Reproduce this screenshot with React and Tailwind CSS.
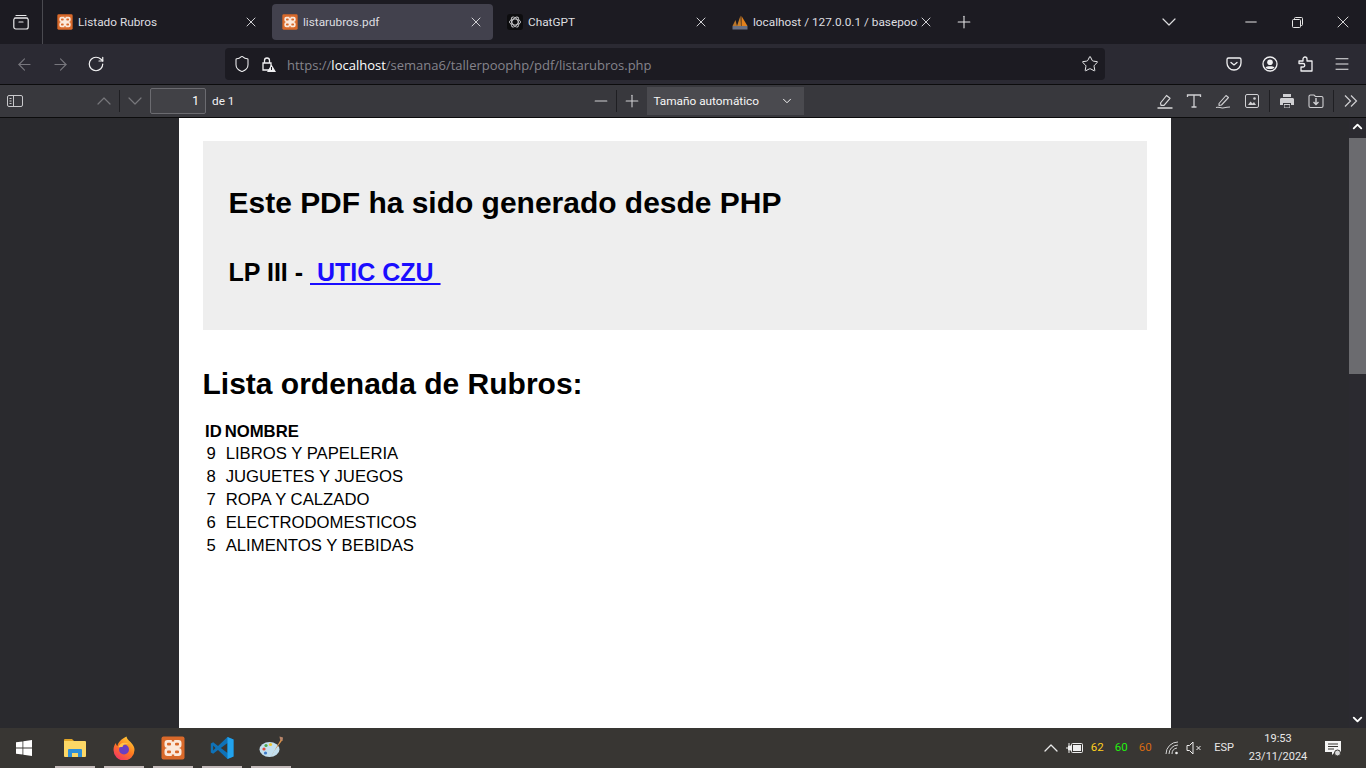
import React from "react";
import { ChevronDown, ChevronUp, Minus, Plus, X, RotateCw, ArrowLeft, ArrowRight, Star, Menu, Shield } from "lucide-react";

const XamppIcon = ({ size = 16 }) => (
  <svg width={size} height={size} viewBox="0 0 24 24" className="shrink-0">
    <rect x="0.5" y="0.5" width="23" height="23" rx="2" fill="#d9692a" />
    <path
      d="M6.500 4h11a3 3 0 0 1 3 3v2a3 3 0 0 1-3 3 3 3 0 0 1 3 3v2a3 3 0 0 1-3 3h-11a3 3 0 0 1-3-3v-2a3 3 0 0 1 3-3 3 3 0 0 1-3-3V7a3 3 0 0 1 3-3z"
      fill="#fbe9dc"
    />
    <g fill="#d9692a">
      <rect x="6" y="6.800" width="4" height="2.800" rx="1" />
      <rect x="14" y="6.800" width="4" height="2.800" rx="1" />
      <rect x="6" y="14.400" width="4" height="2.800" rx="1" />
      <rect x="14" y="14.400" width="4" height="2.800" rx="1" />
      <rect x="10.800" y="3.500" width="2.400" height="2" />
      <rect x="10.800" y="18.500" width="2.400" height="2" />
    </g>
  </svg>
);

const GptIcon = () => (
  <svg width="16" height="16" viewBox="0 0 16 16" className="shrink-0">
    <rect width="16" height="16" rx="3" fill="#0d0d0f" />
    <g fill="none" stroke="#c9c9cc" strokeWidth="0.9">
      <ellipse cx="8" cy="8" rx="5.500" ry="3" />
      <ellipse cx="8" cy="8" rx="5.500" ry="3" transform="rotate(60 8 8)" />
      <ellipse cx="8" cy="8" rx="5.500" ry="3" transform="rotate(120 8 8)" />
    </g>
  </svg>
);

const PmaIcon = () => (
  <svg width="16" height="16" viewBox="0 0 16 16" className="shrink-0">
    <path d="M0.500 12 3.500 6l1.500 6z" fill="#b9762c" />
    <path d="M5 12 8.500 1.500 9 12z" fill="#c9802a" />
    <path d="M9.500 12V2l6 10z" fill="#e2811c" />
    <rect x="0.500" y="12" width="15" height="3.500" fill="#6a7184" />
  </svg>
);

const Tab = ({ icon, title, active }) => (
  <div className={`flex items-center w-[221px] h-9 rounded pl-[10px] pr-[9px] shrink-0 ${active ? "bg-[#42414d]" : ""}`}>
    {icon}
    <span className="ml-[5px] pt-[3px] flex-1 text-[11.8px] text-[#dedee0] whitespace-nowrap overflow-hidden">{title}</span>
    <X size={16} strokeWidth={1.500} className="text-[#d0d0d4] shrink-0" />
  </div>
);

const Sep = ({ className = "" }) => <div className={`w-px h-[22px] bg-[#1f1f23] ${className}`} />;

const TabBar = () => (
  <div className="flex items-center h-11 bg-[#1c1b22] shrink-0 font-['Roboto',sans-serif]">
    <div className="flex items-center justify-center w-[43px] h-11 border-r border-[#4a4a50]">
      <svg width="16" height="16" viewBox="0 0 16 16" fill="none" stroke="#e8e8ea" strokeWidth="1.200">
        <path d="M3 1.500h10M1.500 4h13" strokeLinecap="round" />
        <rect x="0.800" y="4" width="14.400" height="11" rx="2" />
        <path d="M6 8h4" strokeLinecap="round" />
      </svg>
    </div>
    <div className="flex items-center ml-[4px] h-9 gap-[4px] mt-[-0.5px]">
      <Tab icon={<XamppIcon />} title="Listado Rubros" />
      <Tab icon={<XamppIcon />} title="listarubros.pdf" active />
      <Tab icon={<GptIcon />} title="ChatGPT" />
      <Tab icon={<PmaIcon />} title="localhost / 127.0.0.1 / basepoo2" />
    </div>
    <Plus size={20} strokeWidth={1.300} className="ml-[11px] text-[#e4e4e6]" />
    <div className="flex-1" />
    <ChevronDown size={24} strokeWidth={1.200} className="mr-[61px] text-[#dcdcde]" />
    <Minus size={18} strokeWidth={1.200} className="mr-[32px] text-white" />
    <svg width="11" height="11" viewBox="0 0 11 11" fill="none" stroke="#e6e6e6" className="mr-[30px]">
      <rect x="0.500" y="2.500" width="8" height="8" rx="1" />
      <path d="M2.500 2.500V1.500a1 1 0 0 1 1-1h6a1 1 0 0 1 1 1v6a1 1 0 0 1-1 1H8.500" />
    </svg>
    <X size={20} strokeWidth={1.100} className="mr-[13px] text-[#e6e6e6]" />
  </div>
);

const NavBar = () => (
  <div className="flex items-center h-[41px] bg-[#2b2a33] shrink-0 border-b border-[#0c0c0d]">
    <ArrowLeft size={19} strokeWidth={1.400} className="ml-[15px] text-[#77767d]" />
    <ArrowRight size={19} strokeWidth={1.400} className="ml-[17px] text-[#77767d]" />
    <RotateCw size={18} strokeWidth={1.600} className="ml-[17px] text-[#f2f2f3]" />
    <div className="flex items-center ml-[120px] w-[880px] h-8 bg-[#1c1b22] rounded pl-[8px] pr-[6px]">
      <Shield size={18} strokeWidth={1.400} className="text-[#f0f0f2]" />
      <svg width="16" height="16" viewBox="0 0 16 16" className="ml-[9px]">
        <path d="M3 7h8v7H3z" fill="none" stroke="#f0f0f2" strokeWidth="1.300" />
        <path d="M4.500 7V4.500a2.500 2.500 0 0 1 5 0V7" fill="none" stroke="#f0f0f2" strokeWidth="1.300" />
        <path d="M11.500 8.500 16 16H7z" fill="#f0f0f2" />
        <rect x="11" y="11" width="1" height="3" fill="#1c1b22" />
      </svg>
      <span className="ml-[11px] pt-[3px] text-[13px] text-[#85848c] whitespace-nowrap font-['Open_Sans',sans-serif]">
        https://<span className="text-white">localhost</span>/semana6/tallerpoophp/pdf/listarubros.php
      </span>
      <div className="flex-1" />
      <Star size={18} strokeWidth={1.300} className="text-[#f0f0f2]" />
    </div>
    <div className="flex-1" />
    <svg width="16" height="16" viewBox="0 0 16 16" fill="none" stroke="#f0f0f2" strokeWidth="1.300" className="mr-[20px]">
      <path d="M2.500 2h11A1.500 1.500 0 0 1 15 3.500V7a7 7 0 0 1-14 0V3.500A1.500 1.500 0 0 1 2.500 2z" />
      <path d="M5 6.500 8 9l3-2.500" strokeLinecap="round" />
    </svg>
    <svg width="16" height="16" viewBox="0 0 16 16" className="mr-[20px]">
      <circle cx="8" cy="8" r="7" fill="none" stroke="#f0f0f2" strokeWidth="1.300" />
      <circle cx="8" cy="6.200" r="2.800" fill="#f0f0f2" />
      <path d="M3.500 11.500c1-1.600 8-1.600 9 0C11 13.500 5 13.500 3.500 11.500z" fill="#f0f0f2" />
    </svg>
    <svg width="16" height="16" viewBox="0 0 16 16" fill="none" stroke="#f0f0f2" strokeWidth="1.300" className="mr-[19px]">
      <path d="M1 5h4V3a2 2 0 0 1 4 0l0 2h5v10H3v-4h2a1.500 1.500 0 0 0 0-3.500H1z" strokeLinejoin="round" />
    </svg>
    <Menu size={18} strokeWidth={1.300} className="mr-[15px] text-[#f0f0f2]" />
  </div>
);

const PdfBar = () => (
  <div className="flex items-center h-[33px] bg-[#38383d] shrink-0 border-b border-[#0c0c0d] font-['Roboto',sans-serif]">
    <svg width="16" height="14" viewBox="0 0 16 14" fill="none" stroke="#c8c8cb" className="ml-[7px]">
      <rect x="0.500" y="1.500" width="15" height="11" rx="1.500" />
      <path d="M6.500 1.500v11M2.500 4.500h2M2.500 7h2M2.500 9.500h2" />
    </svg>
    <ChevronUp size={24} strokeWidth={1.200} className="ml-[69px] text-[#77777b]" />
    <Sep className="ml-[3px]" />
    <ChevronDown size={24} strokeWidth={1.200} className="ml-[3px] text-[#77777b]" />
    <div className="flex items-center justify-end ml-[3px] w-[56px] h-[26px] bg-[#414146] border border-[#6b6b70] rounded-[2px] pr-[6px] text-[12px] text-white">
      1
    </div>
    <span className="ml-[6px] pt-[1px] text-[11.8px] text-[#f0f0f2]">de 1</span>
    <Minus size={20} strokeWidth={1.300} className="ml-[357px] text-[#d0d0d3]" />
    <Sep className="ml-[5px]" />
    <Plus size={20} strokeWidth={1.300} className="ml-[5px] text-[#d0d0d3]" />
    <div className="flex items-center justify-between ml-[5px] w-[157px] h-7 bg-[#4a4a4f] pl-[6px] pr-[10px] text-[11.8px] text-[#f6f6f6]">
      <span className="pt-[1px]">Tamaño automático</span>
      <ChevronDown size={14} strokeWidth={1.700} />
    </div>
    <div className="flex-1" />
    <svg width="16" height="16" viewBox="0 0 16 16" fill="none" stroke="#d8d8da" strokeWidth="1.200" className="mr-[13px]">
      <path d="M3.500 10 9.500 2.500l3.500 2.800-6 7H4z" strokeLinejoin="round" />
      <path d="M0.500 15h15" strokeWidth="1.500" />
    </svg>
    <svg width="16" height="16" viewBox="0 0 16 16" fill="none" stroke="#d0d0d3" strokeWidth="1.300" className="mr-[13px]">
      <path d="M1.500 4V2h13v2M8 2v12M5.500 14h5" />
    </svg>
    <svg width="16" height="16" viewBox="0 0 16 16" fill="none" stroke="#d0d0d3" strokeWidth="1.100" className="mr-[14px]">
      <path d="M4 10.500 11 2.500l2.500 2-7 7.500-2.500.5z" strokeLinejoin="round" />
      <path d="M1 14.500c3-1 4 .5 6 .5s3-1 8-1" />
    </svg>
    <svg width="14" height="14" viewBox="0 0 14 14" className="mr-[10px]">
      <rect x="0.500" y="0.500" width="13" height="13" rx="1.500" fill="none" stroke="#d0d0d3" />
      <path d="M3 11l2.500-3.500 2 2 1.500-1.500L11 11z" fill="#d0d0d3" />
      <circle cx="9.500" cy="4.500" r="1.300" fill="#d0d0d3" />
    </svg>
    <Sep className="mr-[9px]" />
    <svg width="16" height="16" viewBox="0 0 16 16" className="mr-[13px]">
      <path d="M4 1h8v3H4z" fill="#d0d0d3" />
      <path d="M2 5h12a2 2 0 0 1 1 1v6h-3v-2H4v2H1V6a2 2 0 0 1 1-1z" fill="#d0d0d3" />
      <path d="M5 11h6v4H5z" fill="#d0d0d3" />
      <path d="M5.500 12h5v2.500h-5z" fill="#38383d" />
    </svg>
    <svg width="16" height="15" viewBox="0 0 16 15" fill="none" stroke="#d0d0d3" strokeWidth="1.100" className="mr-[9px]">
      <path d="M1 2.500a1.500 1.500 0 0 1 1.500-1.500H6l1.500 1.500h6A1.500 1.500 0 0 1 15 4v8a1.500 1.500 0 0 1-1.500 1.500h-11A1.500 1.500 0 0 1 1 12z" />
      <path d="M8 4v6M5.500 8 8 10.500 10.500 8" strokeWidth="1.400" />
    </svg>
    <Sep className="mr-[10px]" />
    <svg width="14" height="14" viewBox="0 0 14 14" fill="none" stroke="#d0d0d3" strokeWidth="1.200" className="mr-[8px]">
      <path d="M1 1.500 6.500 7 1 12.500M7 1.500 12.500 7 7 12.500" />
    </svg>
  </div>
);

const rubros = [
  [9, "LIBROS Y PAPELERIA"],
  [8, "JUGUETES Y JUEGOS"],
  [7, "ROPA Y CALZADO"],
  [6, "ELECTRODOMESTICOS"],
  [5, "ALIMENTOS Y BEBIDAS"],
];

const PdfPage = () => (
  <div className="w-[992px] bg-white pt-[23px] px-6 text-black font-['Liberation_Sans',Arial,sans-serif]">
    <div className="bg-[#eeeeee] h-[189px] pl-[26px] pt-[44px]">
      <h1 className="text-[29.98px] leading-[36px] font-bold">Este PDF ha sido generado desde PHP</h1>
      <h2 className="mt-[37px] text-[25px] leading-[28px] font-bold">
        LP III - <a className="text-[#1a0dff] underline whitespace-pre"> UTIC CZU </a>
      </h2>
    </div>
    <h2 className="mt-[36px] text-[30px] leading-[36px] font-bold">Lista ordenada de Rubros:</h2>
    <table className="mt-[19px] ml-[1.5px] text-[16.7px] border-separate border-spacing-0">
      <thead>
        <tr className="h-[21px] leading-[21px]">
          <th className="px-[1px] font-bold">ID</th>
          <th className="pl-[2px] font-bold text-left">NOMBRE</th>
        </tr>
      </thead>
      <tbody>
        {rubros.map(([id, name]) => (
          <tr key={id} className="h-[23px] leading-[23px]">
            <td className="text-left pl-[2.500px]">{id}</td>
            <td className="pl-[3px]">{name}</td>
          </tr>
        ))}
      </tbody>
    </table>
  </div>
);

const Scrollbar = () => (
  <div className="flex flex-col items-center w-[17px] bg-[#2b2a30]">
    <ChevronUp size={15} strokeWidth={3} className="mt-[1px] text-white" />
    <div className="mt-[4px] w-full h-[236px] bg-[#6b6b6f]" />
    <div className="flex-1" />
    <ChevronDown size={15} strokeWidth={3} className="mb-[1px] text-white" />
  </div>
);

const TaskItem = ({ children }) => (
  <div className="relative flex items-center justify-center w-[40px] h-10 mr-[9px]">
    {children}
    <div className="absolute bottom-0 inset-x-0 h-[2px] bg-[#c2b9b9]" />
  </div>
);

const Taskbar = () => (
  <div className="flex items-center h-10 bg-[#383633] shrink-0 text-[#e8e8e8] font-['Roboto',sans-serif]">
    <svg width="16" height="16" viewBox="0 0 16 16" className="ml-[16px] mr-[23px]" fill="#fff">
      <path d="M0 2.300 6.500 1.400V7.600H0zM7.300 1.300 16 0V7.600H7.300zM0 8.400H6.500V14.600L0 13.700zM7.300 8.400H16V16L7.300 14.700z" />
    </svg>
    <TaskItem>
      <svg width="22" height="20" viewBox="0 0 22 20">
        <path d="M0 2a1 1 0 0 1 1-1h7l2 2h-10z" fill="#e0a526" />
        <path d="M0 3h21a1 1 0 0 1 1 1v14a1 1 0 0 1-1 1H1a1 1 0 0 1-1-1z" fill="#fbd766" />
        <path d="M4 19v-7a1 1 0 0 1 1-1h12a1 1 0 0 1 1 1v7h-4v-4H8v4z" fill="#2e8fd8" />
      </svg>
    </TaskItem>
    <TaskItem>
      <svg width="24" height="24" viewBox="0 0 24 24">
        <defs>
          <linearGradient id="foxFlame" x1="0.800" y1="0" x2="0.200" y2="1">
            <stop offset="0" stopColor="#ffd43a" />
            <stop offset="0.500" stopColor="#ff7a1e" />
            <stop offset="1" stopColor="#f0306a" />
          </linearGradient>
        </defs>
        <path d="M14.500 0.500c.5 2.500 2 3.500 4 5.500 3 3 4 5.500 4 8a10.500 10.500 0 0 1-21 0c0-3 1-5.500 2.500-7 0 1.500.5 2.500 1.500 3 .5-4 4-7 9-9.500z" fill="url(#foxFlame)" />
        <circle cx="12" cy="13.500" r="5" fill="#6a3fc2" />
        <path d="M6.500 11c1.500-4 6-5.500 10-3-3.500-.5-5.500.5-6 3-1.500 0-3 .5-4 0z" fill="#ffc24a" />
      </svg>
    </TaskItem>
    <TaskItem>
      <XamppIcon size={24} />
    </TaskItem>
    <TaskItem>
      <svg width="24" height="24" viewBox="0 0 24 24">
        <path
          fillRule="evenodd"
          d="M17.500 1 8 10 3.200 6.300 0.800 7.600V16.400L3.200 17.700 8 14 17.500 23 23.500 20.500V3.500zM17.500 7 10.800 12 17.500 17zM3.200 9.500 5.500 12 3.200 14.500z"
          fill="#0f72b8"
        />
        <path fillRule="evenodd" d="M17.500 1 23.500 3.500V20.500L17.500 23V17V7z" fill="#22a3ee" />
      </svg>
    </TaskItem>
    <TaskItem>
      <svg width="24" height="24" viewBox="0 0 24 24">
        <ellipse cx="10.500" cy="13.500" rx="10" ry="7.500" fill="#c3dfee" />
        <circle cx="5" cy="13" r="1.600" fill="#e24d3d" />
        <circle cx="7" cy="9.500" r="1.600" fill="#4aa84f" />
        <circle cx="11.500" cy="8.500" r="1.600" fill="#f0c52f" />
        <circle cx="6.500" cy="17" r="1.600" fill="#3d7ac9" />
        <path d="M22 3 23.500 4 14.500 16 11 22.500z" fill="#d9924a" />
        <path d="M20.500 0.500 24 1.500 23.500 5 21 3.500z" fill="#b8856a" />
      </svg>
    </TaskItem>
    <div className="flex-1" />
    <ChevronUp size={24} strokeWidth={1.300} className="mr-[3px]" />
    <svg width="17" height="12" viewBox="0 0 17 12" className="mr-[2px]" fill="none" stroke="#eee">
      <rect x="5.500" y="1.500" width="11" height="9" rx="1" />
      <rect x="7" y="3" width="8" height="6" fill="#eee" stroke="none" />
      <path d="M0 6h2" />
      <path d="M2 3.500h3.500v5H2z" fill="#eee" stroke="none" />
      <path d="M3 1v2.500M3 8.500V11" />
    </svg>
    <span className="w-[24px] text-center text-[11.5px] text-[#ffcf1f]">62</span>
    <span className="w-[24px] text-center text-[11.5px] text-[#22f010]">60</span>
    <span className="w-[24px] text-center text-[11.5px] text-[#d66a12]">60</span>
    <svg width="15" height="14" viewBox="0 0 15 14" fill="none" stroke="#d6d6d6" className="ml-[8px]">
      <path d="M1 13A12 12 0 0 1 13 1M4 13A9 9 0 0 1 13 4M7 13A6 6 0 0 1 12 7" />
      <circle cx="11.500" cy="12" r="1.300" fill="#eee" stroke="none" />
    </svg>
    <svg width="16" height="14" viewBox="0 0 16 14" fill="none" stroke="#eee" className="ml-[6px]">
      <path d="M1 4.500h2.500L7 1v12L3.500 9.500H1z" />
      <path d="M10.500 5l4 4M14.500 5l-4 4" />
    </svg>
    <span className="ml-[12px] text-[11px]">ESP</span>
    <div className="flex flex-col items-center ml-[15px] text-[11px] leading-[18px] w-[58px]">
      <span>19:53</span>
      <span className="whitespace-nowrap">23/11/2024</span>
    </div>
    <svg width="18" height="17" viewBox="0 0 18 17" className="ml-[17px] mr-[24px]">
      <path d="M1 1h16v11h-6l-3 3v-3H1z" fill="#f4f4f4" />
      <path d="M4 4h10M4 6.500h10M4 9h6" stroke="#383633" />
      <circle cx="13.500" cy="13" r="3" fill="#d8d8d8" stroke="#383633" />
    </svg>
  </div>
);

const App = () => (
  <div className="flex flex-col h-screen overflow-hidden bg-[#2a2a2e] font-['Roboto',sans-serif]">
    <TabBar />
    <NavBar />
    <PdfBar />
    <div className="flex flex-1 min-h-0 overflow-hidden">
      <div className="flex flex-1 justify-center">
        <PdfPage />
      </div>
      <Scrollbar />
    </div>
    <Taskbar />
  </div>
);

export default App;
